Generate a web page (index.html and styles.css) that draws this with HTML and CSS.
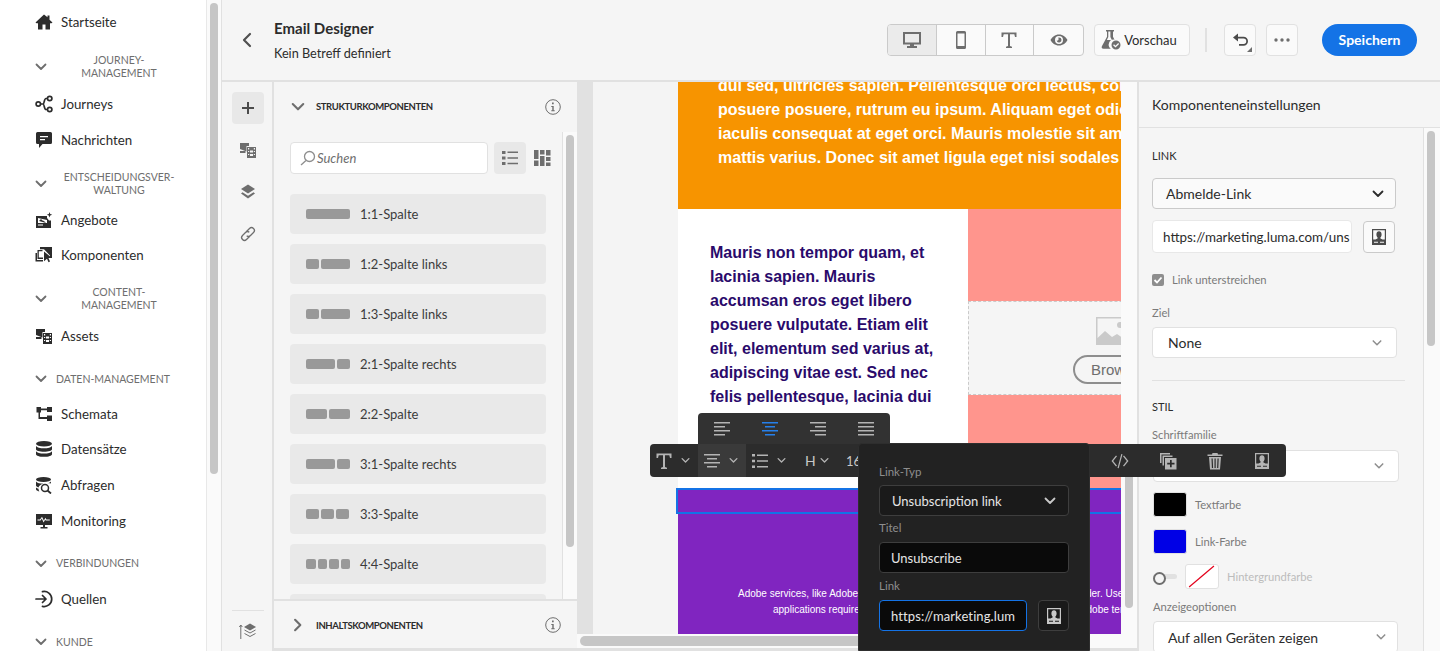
FILE: index.html
```html
<!DOCTYPE html>
<html lang="de">
<head>
  <meta charset="UTF-8">
  <title>Email Designer</title>
  <link rel="stylesheet" href="styles.css">
</head>
<body>

  <svg class="sprite" width="0" height="0">
    <symbol id="i-chev" viewBox="0 0 12 12"><path d="M1.5 3.5 6 8l4.5-4.5" fill="none" stroke="currentColor" stroke-width="1.8" stroke-linecap="round" stroke-linejoin="round"/></symbol>
    <symbol id="i-stamp" viewBox="0 0 18 18"><path fill-rule="evenodd" d="M2 1h14v16H2zM3.200 2.200v9.300h2.300c1.400-.5 2.200-1 2.300-1.700-.9-.8-1.400-2-1.400-3.300C6.400 4.500 7.500 3.300 9 3.300s2.600 1.200 2.600 3.200c0 1.300-.5 2.500-1.400 3.300.1.700.9 1.200 2.300 1.700h2.300V2.200zM4 13.800v1h4v-1zm6 0v1h4v-1z"/></symbol>
    <symbol id="i-assets" viewBox="0 0 18 18"><path d="M1 2h9v3H7.500v5.500L1 8z"/><path d="M1 10h5.500v2H1z"/><path fill-rule="evenodd" d="M8 6h9v11H8zm1 1v1.500h1.200V7zm5.800 0v1.500H16V7zM9 10v1h1.200v-1zm5.800 0v1H16v-1zM11 9.500v2h3v-2zm0 3.500v2h3v-2zM9 13v1h1.200v-1zm5.800 0v1H16v-1z"/></symbol>
    <symbol id="i-info" viewBox="0 0 16 16"><circle cx="8" cy="8" r="7.300" fill="none" stroke="currentColor"/><path d="M7 3.500h1.700v1.700H7zM6.300 7h2.400v4.300h1v1H6.300v-1h1V8h-1z"/></symbol>
  </svg>

  <div class="shell">
    <aside class="nav">
      <a class="nav-item">
        <svg class="nav-icon" viewBox="0 0 18 18"><path d="M9 1.500 .5 9.500l1 .8H3V16.500h4.500v-5h3v5H15v-6.200h1.500l1-.8-3-2.800V2.500H12.500v1.800z"/></svg>
        Startseite
      </a>
      <div class="nav-section multi">
        <svg class="nav-chev"><use href="#i-chev"/></svg>
        <span>Journey-<br>Management</span>
      </div>
      <a class="nav-item">
        <svg class="nav-icon" viewBox="0 0 18 18"><g fill="none" stroke="currentColor" stroke-width="1.700"><circle cx="3.300" cy="9" r="2.200"/><circle cx="14.700" cy="3.500" r="2.200"/><circle cx="14.700" cy="14.500" r="2.200"/><path d="M5.500 9h2.500c1.500 0 1-5.500 3-5.500h1.500M8 9c1.500 0 1 5.500 3 5.500h1.500"/></g></svg>
        Journeys
      </a>
      <a class="nav-item">
        <svg class="nav-icon" viewBox="0 0 18 18"><path fill-rule="evenodd" d="M2.500 1h13A1.500 1.500 0 0 1 17 2.500v9a1.500 1.500 0 0 1-1.500 1.500H7.500L4 17v-4H2.500A1.500 1.500 0 0 1 1 11.500v-9A1.500 1.500 0 0 1 2.500 1zM5 5v1.200h8V5zm0 3v1.200h5V8z"/></svg>
        Nachrichten
      </a>
      <div class="nav-section multi tight">
        <svg class="nav-chev"><use href="#i-chev"/></svg>
        <span>Entscheidungsver-<br>waltung</span>
      </div>
      <a class="nav-item">
        <svg class="nav-icon" viewBox="0 0 18 18"><path fill-rule="evenodd" d="M1 5h11v2l2 2.500h2V17H1zm2 2v5h9V9zm1 3 2-2 1.500 1.500L9 10l2 2zM3 13.500v1h5v-1z"/><path d="m14.500 1 .7 2 2 .7-2 .7-.7 2-.7-2-2-.7 2-.7z"/></svg>
        Angebote
      </a>
      <a class="nav-item">
        <svg class="nav-icon" viewBox="0 0 18 18"><path fill-rule="evenodd" d="M5 1h12v11h-2V9.500L9 3.200H5zM2.500 4h5v1.300H3.800v6.200H8V13H2.500zM.5 7H2v7h6v1.500H.5z"/><path d="m9 5.500 8 6.500h-3.500L15 15.500l-1.500.7-1.500-3.500-3 2.500z"/></svg>
        Komponenten
      </a>
      <div class="nav-section multi last">
        <svg class="nav-chev"><use href="#i-chev"/></svg>
        <span>Content-<br>Management</span>
      </div>
      <a class="nav-item">
        <svg class="nav-icon"><use href="#i-assets"/></svg>
        Assets
      </a>
      <div class="nav-section single">
        <svg class="nav-chev"><use href="#i-chev"/></svg>
        <span>Daten-Management</span>
      </div>
      <a class="nav-item">
        <svg class="nav-icon" viewBox="0 0 18 18"><path d="M1.500 2H6v1.500h6V2h5v5h-5V5.200H6V7.500H5V12h7v-1.500h5V16h-5v-2H3.500V7.500h-2z"/></svg>
        Schemata
      </a>
      <a class="nav-item">
        <svg class="nav-icon" viewBox="0 0 18 18"><ellipse cx="9" cy="3.800" rx="8" ry="2.800"/><path d="M1 6c1 1.500 4 2.300 8 2.300S16 7.500 17 6v3.200c0 1.400-3.500 2.500-8 2.500s-8-1.100-8-2.500z"/><path d="M1 11.300c1 1.500 4 2.300 8 2.300s7-.8 8-2.300v2.900c0 1.500-3.500 2.600-8 2.600s-8-1.100-8-2.600z"/></svg>
        Datensätze
      </a>
      <a class="nav-item">
        <svg class="nav-icon" viewBox="0 0 18 18"><ellipse cx="8.500" cy="3.500" rx="7.500" ry="2.500"/><path d="M1 5.500C2 7 5 7.700 8.500 7.700c-3 .5-4.500 2-5 3.800C2 11 1 10.300 1 9.500zM1 11.500c.6.500 1.500.9 2.500 1.200 0 1 .3 2 .9 2.700C2.400 15 1 14.200 1 13.200zM16 5.500v2c-1-.2-3-.2-4 0 1.500-.3 3-.9 4-2z"/><circle cx="10" cy="12" r="3.500" fill="none" stroke="currentColor" stroke-width="1.500"/><path d="m12.500 14.500 3.500 3" stroke="currentColor" stroke-width="1.800" fill="none"/></svg>
        Abfragen
      </a>
      <a class="nav-item">
        <svg class="nav-icon" viewBox="0 0 18 18"><path fill-rule="evenodd" d="M1 2h16v11h-7v2h2.500v1.500h-7V15H8v-2H1zm1.500 6.500h3l1.300-2 1.800 4 1.500-2.800.7.800h4V7.500h-3.500L10.500 5.700 8.800 8.500 7 4.700 5 7.500H2.500z"/></svg>
        Monitoring
      </a>
      <div class="nav-section single">
        <svg class="nav-chev"><use href="#i-chev"/></svg>
        <span>Verbindungen</span>
      </div>
      <a class="nav-item">
        <svg class="nav-icon" viewBox="0 0 18 18"><g fill="none" stroke="currentColor" stroke-width="1.700" stroke-linecap="round" stroke-linejoin="round"><path d="M1 9h10M7.500 5.500 11 9l-3.500 3.500"/><path d="M7.500 1.700a7.500 7.500 0 1 1 0 14.600"/></g></svg>
        Quellen
      </a>
      <div class="nav-section single">
        <svg class="nav-chev"><use href="#i-chev"/></svg>
        <span>Kunde</span>
      </div>
    </aside>
    <div class="nav-scroll"><div class="nav-thumb"></div></div>

    <main class="app">
      <header class="topbar">
        <svg class="back" viewBox="0 0 12 16"><path d="M9 2 3 8l6 6" fill="none" stroke="currentColor" stroke-width="2.200" stroke-linecap="round" stroke-linejoin="round"/></svg>
        <div class="title-block">
          <div class="title">Email Designer</div>
          <div class="subtitle">Kein Betreff definiert</div>
        </div>
        <div class="seg">
          <button class="seg-btn active">
            <svg viewBox="0 0 18 18" width="18" height="18"><path fill-rule="evenodd" d="M0 1h18v12.500h-7V15h3v2H4v-2h3v-1.500H0zm2 2v8.500h14V3z"/></svg>
          </button>
          <button class="seg-btn">
            <svg viewBox="0 0 18 18" width="18" height="18"><path fill-rule="evenodd" d="M5.500 0h7A1.500 1.500 0 0 1 14 1.500v15a1.500 1.500 0 0 1-1.500 1.500h-7A1.500 1.500 0 0 1 4 16.500v-15A1.500 1.500 0 0 1 5.500 0zM5.500 2.500v12.500h7V2.500z"/></svg>
          </button>
          <button class="seg-btn">
            <svg viewBox="0 0 18 18" width="18" height="18"><path d="M1.500 1.500h15V6H15L14.300 3.300H10V15l2 .8V17H6v-1.200l2-.8V3.300H3.700L3 6H1.500z"/></svg>
          </button>
          <button class="seg-btn">
            <svg viewBox="0 0 18 18" width="18" height="18"><path fill-rule="evenodd" d="M9 3.500c4 0 7 2.500 8.500 5.500C16 12 13 14.500 9 14.500S2 12 .5 9C2 6 5 3.500 9 3.500zM9 5a4 4 0 1 0 0 8 4 4 0 0 0 0-8zm0 1.500A2.500 2.500 0 1 1 6.600 9.600 1.500 1.500 0 0 0 8.500 7.700c0-.5-.1-.9-.3-1.100.3 0 .5-.1.800-.1z"/></svg>
          </button>
        </div>
        <button class="btn preview">
          <svg viewBox="0 0 20 20" width="20" height="20"><path fill-rule="evenodd" d="M5 0h8v1.500h-1v5.200l1.500 3a5 5 0 0 0-3.700 9H2.500C.8 18.700.2 17.500 1 16L6 6.700V1.500H5zm2.300 1.500v5.600l-1.500 3h5.100l-1.500-3V1.500z"/><path fill-rule="evenodd" d="M15 10.500a4.500 4.500 0 1 1 0 9 4.500 4.500 0 0 1 0-9zm2.200 2.500L14.500 15.800 13 14.300l-.9.900 2.400 2.400 3.600-3.700z"/></svg>
          Vorschau
        </button>
        <div class="bar-divider"></div>
        <button class="btn icon-btn undo">
          <svg viewBox="0 0 18 18" width="18" height="18"><path d="M7 2.500 2 6.500l5 4V7.500h5.500a2.700 2.700 0 0 1 0 5.500H8v1.800h4.500a4.500 4.500 0 0 0 0-9H7z"/></svg>
        </button>
        <button class="btn icon-btn more">
          <svg viewBox="0 0 18 6" width="18" height="6"><circle cx="3" cy="3" r="1.700"/><circle cx="9" cy="3" r="1.700"/><circle cx="15" cy="3" r="1.700"/></svg>
        </button>
        <button class="save">Speichern</button>
      </header>

      <div class="workspace">
        <div class="rail">
          <button class="rail-btn active">
            <svg viewBox="0 0 14 14" width="14" height="14"><path d="M6 1h2v5h5v2H8v5H6V8H1V6h5z"/></svg>
          </button>
          <button class="rail-btn"><svg width="18" height="18"><use href="#i-assets"/></svg></button>
          <button class="rail-btn">
            <svg viewBox="0 0 18 18" width="18" height="18"><path d="M9 1.500 16 6 9 10.500 2 6z"/><path d="m3.500 9.200 5.500 3.500 5.500-3.500L16 10.500l-7 5-7-5z"/></svg>
          </button>
          <button class="rail-btn">
            <svg viewBox="0 0 18 18" width="18" height="18"><g fill="none" stroke="currentColor" stroke-width="1.300"><path d="m7.500 6.500 3-3a2.800 2.800 0 0 1 4 4l-3 3a2.800 2.800 0 0 1-3.800.2"/><path d="m10.500 11.500-3 3a2.800 2.800 0 0 1-4-4l3-3a2.800 2.800 0 0 1 3.800-.2"/></g></svg>
          </button>
          <div class="rail-foot">
            <svg viewBox="0 0 18 18" width="18" height="18"><path d="M11 1.500 17 5l-6 3.500L5 5z"/><g fill="none" stroke="currentColor"><path d="M5.500 8 11 11l5.500-3"/><path d="M5.500 11.500 11 14.500l5.500-3"/><path d="M1.800 17V3M.3 5l1.500-2 1.500 2"/></g></svg>
          </div>
        </div>

        <section class="library">
          <div class="lib-head">
            <svg class="lib-chev"><use href="#i-chev"/></svg>
            <span class="lib-title">Strukturkomponenten</span>
            <svg class="info"><use href="#i-info"/></svg>
          </div>
          <div class="lib-body">
            <div class="lib-list">
              <div class="lib-tools">
                <div class="search">
                  <svg viewBox="0 0 16 16" width="16" height="16"><g fill="none" stroke="#8e8e8e" stroke-width="1.300"><circle cx="9.500" cy="6.500" r="5"/><path d="M6 10.500 1 15"/></g></svg>
                  Suchen
                </div>
                <button class="view-btn active">
                  <svg viewBox="0 0 18 18" width="18" height="18"><path d="M1 2h3.500v3H1zM6.500 2.500H17V4H6.500zM1 7.500h3.500v3H1zM6.500 8.200H17v1.500H6.500zM1 13h3.500v3H1zM6.500 13.700H17v1.500H6.500z"/></svg>
                </button>
                <button class="view-btn">
                  <svg viewBox="0 0 18 18" width="18" height="18"><path d="M1 1h4.500v9H1zM1 11.500h4.500V17H1zM7 1h4.500v4.500H7zM7 7h4.500v10H7zM13 1h4.500v5.500H13zM13 8h4.500v4H13zM13 13.500h4.500V17H13z"/></svg>
                </button>
              </div>
              <div class="card"><span class="bars"><i class="w44"></i></span>1:1-Spalte</div>
              <div class="card"><span class="bars"><i class="w13"></i><i class="w29"></i></span>1:2-Spalte links</div>
              <div class="card"><span class="bars"><i class="w13"></i><i class="w29"></i></span>1:3-Spalte links</div>
              <div class="card"><span class="bars"><i class="w29"></i><i class="w13"></i></span>2:1-Spalte rechts</div>
              <div class="card"><span class="bars"><i class="w21"></i><i class="w21"></i></span>2:2-Spalte</div>
              <div class="card"><span class="bars"><i class="w29"></i><i class="w13"></i></span>3:1-Spalte rechts</div>
              <div class="card"><span class="bars"><i class="w13"></i><i class="w13"></i><i class="w13"></i></span>3:3-Spalte</div>
              <div class="card"><span class="bars"><i class="w9"></i><i class="w9"></i><i class="w9"></i><i class="w9"></i></span>4:4-Spalte</div>
              <div class="card"></div>
            </div>
            <div class="lib-scroll"><div class="lib-thumb"></div></div>
          </div>
          <div class="lib-foot">
            <svg class="lib-chev closed"><use href="#i-chev"/></svg>
            <span class="lib-title">Inhaltskomponenten</span>
            <svg class="info"><use href="#i-info"/></svg>
          </div>
        </section>

        <section class="canvas">
          <div class="canvas-view">
            <div class="email">
              <div class="orange">
                dui sed, ultricies sapien. Pellentesque orci lectus, consectetur<br>
                posuere posuere, rutrum eu ipsum. Aliquam eget odio sed<br>
                iaculis consequat at eget orci. Mauris molestie sit amet metus<br>
                mattis varius. Donec sit amet ligula eget nisi sodales egestas
              </div>
              <div class="split">
                <div class="split-text">
                  Mauris non tempor quam, et<br>
                  lacinia sapien. Mauris<br>
                  accumsan eros eget libero<br>
                  posuere vulputate. Etiam elit<br>
                  elit, elementum sed varius at,<br>
                  adipiscing vitae est. Sed nec<br>
                  felis pellentesque, lacinia dui<br>
                  sed, ultricies sapien.
                </div>
                <div class="split-media">
                  <div class="dropzone">
                    <svg class="placeholder" viewBox="0 0 32 28" width="32" height="28"><path fill="#cacaca" fill-rule="evenodd" d="M0 0h32v28H0zM24 5a3 3 0 1 0 0 6 3 3 0 0 0 0-6zM1.500 21 9 14l7 6 5-3 9 6V1.500H1.500z"/></svg>
                    <span class="browse">Browse</span>
                  </div>
                </div>
              </div>
              <div class="purple">
                <div class="selected-row"></div>
                <div class="legal">
                  <div>Adobe services, like Adobe Creative Cloud applications, are licensed to the holder. Use of these</div>
                  <div class="legal-second">applications require a current membership and the acceptance of the Adobe terms of use.</div>
                </div>
              </div>
            </div>
            <div class="canvas-scroll"><div class="canvas-thumb"></div></div>
          </div>
          <div class="hscroll"><div class="hthumb"></div></div>
        </section>

        <section class="settings">
          <div class="settings-head">Komponenteneinstellungen</div>
          <div class="settings-body">
            <div class="settings-form">
              <h4 class="group">Link</h4>
              <div class="select link-type">Abmelde-Link<svg class="sel-chev dark"><use href="#i-chev"/></svg></div>
              <div class="url-row">
                <div class="field">https://marketing.luma.com/uns</div>
                <button class="stamp-btn"><svg width="18" height="18"><use href="#i-stamp"/></svg></button>
              </div>
              <label class="check">
                <span class="box"><svg viewBox="0 0 12 12" width="12" height="12"><path d="m2.500 6 2.500 2.500 4.500-5" fill="none" stroke="#fff" stroke-width="1.800"/></svg></span>
                Link unterstreichen
              </label>
              <div class="label ziel">Ziel</div>
              <div class="select plain none">None<svg class="sel-chev"><use href="#i-chev"/></svg></div>
              <hr class="rule">
              <h4 class="group stil">Stil</h4>
              <div class="label font-label">Schriftfamilie</div>
              <div class="select plain font-sel"><svg class="sel-chev"><use href="#i-chev"/></svg></div>
              <div class="color-row first"><span class="swatch black"></span>Textfarbe</div>
              <div class="color-row"><span class="swatch blue"></span>Link-Farbe</div>
              <div class="color-row off">
                <span class="toggle"></span>
                <span class="swatch none-swatch"><svg viewBox="0 0 34 25" width="32" height="23"><path d="M3 24 30 1" stroke="#e3001b" stroke-width="1.300"/></svg></span>
                Hintergrundfarbe
              </div>
              <div class="label display-label">Anzeigeoptionen</div>
              <div class="select plain display">Auf allen Geräten zeigen<svg class="sel-chev"><use href="#i-chev"/></svg></div>
            </div>
            <div class="settings-scroll"><div class="settings-thumb"></div></div>
          </div>
        </section>
      </div>
    </main>
  </div>

  <!-- floating editor toolbars -->
  <div class="align-pop">
    <svg viewBox="0 0 18 18" class="tb-icon"><path d="M1 2h16v1.500H1zM1 6h11v1.500H1zM1 10h16v1.500H1zM1 14h11v1.500H1z"/></svg>
    <svg viewBox="0 0 18 18" class="tb-icon on"><path d="M1 2h16v1.500H1zM4 6h10v1.500H4zM1 10h16v1.500H1zM4 14h10v1.500H4z"/></svg>
    <svg viewBox="0 0 18 18" class="tb-icon"><path d="M1 2h16v1.500H1zM6 6h11v1.500H6zM1 10h16v1.500H1zM6 14h11v1.500H6z"/></svg>
    <svg viewBox="0 0 18 18" class="tb-icon"><path d="M1 2h16v1.500H1zM1 6h16v1.500H1zM1 10h16v1.500H1zM1 14h16v1.500H1z"/></svg>
  </div>

  <div class="toolbar">
    <div class="tb-left">
      <span class="tb-group">
        <svg viewBox="0 0 18 18" class="tb-icon"><path d="M1.500 1.500h15V6H15l-.7-2.700H10V15l2 .8V17H6v-1.200l2-.8V3.300H3.700L3 6H1.500z"/></svg>
        <svg class="tb-chev"><use href="#i-chev"/></svg>
      </span>
      <span class="tb-group active">
        <svg viewBox="0 0 18 18" class="tb-icon"><path d="M1 2h16v1.500H1zM4 6h10v1.500H4zM1 10h16v1.500H1zM4 14h10v1.500H4z"/></svg>
        <svg class="tb-chev"><use href="#i-chev"/></svg>
      </span>
      <span class="tb-group">
        <svg viewBox="0 0 18 18" class="tb-icon"><path d="M1 2h3v2.500H1zM6 2.500h11V4H6zM1 7.700h3v2.500H1zM6 8.200h11v1.500H6zM1 13.500h3V16H1zM6 14h11v1.500H6z"/></svg>
        <svg class="tb-chev"><use href="#i-chev"/></svg>
      </span>
      <span class="tb-group h">H<svg class="tb-chev"><use href="#i-chev"/></svg></span>
      <span class="tb-size">16</span>
    </div>
    <div class="tb-right">
      <svg viewBox="0 0 20 18" class="tb-icon wide"><path d="M6 3.500 1.500 9 6 14.500l1-.8L3.200 9 7 4.300zM14 3.500 18.500 9 14 14.500l-1-.8L16.800 9 13 4.300zM11.300 2l1.200.2-3.800 14-1.200-.2z"/></svg>
      <svg viewBox="0 0 18 18" class="tb-icon"><path d="M1 1h10v1.500H2.500V11H1z"/><path d="M3.500 3.500h10V5H5v8.500H3.500z"/><path fill-rule="evenodd" d="M6 6h11.500v11.500H6zm5 2v2.800H8.200v1.700H11v2.800h1.700v-2.800h2.800v-1.700h-2.800V8z"/></svg>
      <svg viewBox="0 0 18 18" class="tb-icon"><path fill-rule="evenodd" d="M6.500 1h5l.5 1.500h4.500V4h-15V2.500H6zM3 5h12l-1 12.500H4zm2.500 1.500.4 9.500h1.200l-.4-9.500zm3 0V16h1.200V6.500zm3 0-.4 9.500h1.200l.4-9.500z"/></svg>
      <svg viewBox="0 0 18 18" class="tb-icon"><use href="#i-stamp"/></svg>
    </div>
  </div>

  <div class="link-pop">
    <div class="pop-label first">Link-Typ</div>
    <div class="pop-select">Unsubscription link<svg class="pop-chev"><use href="#i-chev"/></svg></div>
    <div class="pop-label titel">Titel</div>
    <div class="pop-input">Unsubscribe</div>
    <div class="pop-label link">Link</div>
    <div class="pop-row">
      <div class="pop-input focus">https://marketing.lum</div>
      <button class="pop-stamp"><svg width="18" height="18"><use href="#i-stamp"/></svg></button>
    </div>
  </div>

</body>
</html>
```

FILE: styles.css
```css
* {
  box-sizing: border-box;
}

html, body {
  height: 100%;
  margin: 0;
  overflow: hidden;
}

body {
  font-family: Lato, 'Noto Sans', sans-serif;
  font-size: 14px;
  color: #2c2c2c;
  background: #fff;
}

button {
  font-family: inherit;
  padding: 0;
  cursor: pointer;
}

.sprite {
  position: absolute;
}

.shell {
  display: flex;
  height: 651px;
}

/* left nav */
.nav {
  width: 207px;
  flex: none;
  padding: 4px 0 0 35px;
  background: #fff;
  border-right: 1px solid #e8e8e8;
  overflow: hidden;
}

.nav-item {
  display: flex;
  align-items: center;
  gap: 8px;
  height: 35.6px;
  font-size: 13.300px;
  color: #2c2c2c;
}

.nav-icon {
  width: 18px;
  height: 18px;
  flex: none;
  fill: #2c2c2c;
  color: #2c2c2c;
}

.nav-section {
  display: flex;
  align-items: center;
  font-size: 10.500px;
  line-height: 13px;
  text-transform: uppercase;
  color: #6e6e6e;
}

.nav-chev {
  width: 12px;
  height: 12px;
  flex: none;
  color: #6e6e6e;
  margin-right: 9px;
}

.nav-section.multi {
  padding: 14px 0 7px;
}

.nav-section.multi span {
  width: 114px;
  margin-left: 6px;
  text-align: center;
}

.nav-section.tight {
  padding: 13px 0 5px;
}

.nav-section.last {
  padding: 13px 0 6px;
}

.nav-section.single {
  padding: 19px 0 10.5px;
}

.nav-scroll {
  width: 14px;
  flex: none;
  background: #fafafa;
  padding: 3px 3px 0;
}

.nav-thumb {
  height: 471px;
  background: #c6c6c6;
  border-radius: 4px;
}

.app {
  flex: 1;
  min-width: 0;
  display: flex;
  flex-direction: column;
  border-left: 1px solid #e1e1e1;
  background: #f5f5f5;
}

/* header */
.topbar {
  height: 82px;
  flex: none;
  display: flex;
  align-items: center;
  padding: 0 23px 0 19px;
  border-bottom: 2px solid #e1e1e1;
}

.back {
  width: 12px;
  height: 16px;
  color: #505050;
}

.title-block {
  margin: -1px auto 0 21px;
}

.title {
  font-size: 15px;
  font-weight: 700;
  line-height: 20px;
  margin-bottom: 6px;
}

.subtitle {
  font-size: 12.700px;
  line-height: 18px;
}

.seg {
  display: flex;
  height: 32px;
  border: 1px solid #cacaca;
  border-radius: 4px;
  background: #fafafa;
  overflow: hidden;
}

.seg-btn {
  width: 48.750px;
  border: none;
  border-right: 1px solid #cacaca;
  background: none;
  display: flex;
  align-items: center;
  justify-content: center;
  fill: #6e6e6e;
}

.seg-btn:last-child {
  border-right: none;
}

.seg-btn.active {
  background: #ebebeb;
}

.btn {
  height: 32px;
  border: 1px solid #e1e1e1;
  border-radius: 4px;
  background: #fafafa;
  display: flex;
  align-items: center;
  justify-content: center;
  fill: #6e6e6e;
  color: #2c2c2c;
  font-size: 13px;
}

.preview {
  width: 96px;
  gap: 3px;
  margin-left: 10px;
  padding-right: 6px;
}

.bar-divider {
  width: 2px;
  height: 24px;
  background: #e1e1e1;
  margin: 0 17px 0 15px;
}

.icon-btn {
  width: 32px;
}

.undo {
  position: relative;
  fill: #4b4b4b;
}

/* small corner triangle on the undo button */
.undo::after {
  content: "";
  position: absolute;
  right: 3px;
  bottom: 3px;
  border-style: solid;
  border-width: 0 0 5px 5px;
  border-color: transparent transparent #6e6e6e transparent;
}

.more {
  margin-left: 10px;
}

.save {
  width: 95px;
  height: 32px;
  margin-left: 24px;
  padding-bottom: 2px;
  border: none;
  border-radius: 16px;
  background: #1473e6;
  color: #fff;
  font-size: 14px;
  font-weight: 700;
}

/* workspace */
.workspace {
  flex: 1;
  min-height: 0;
  display: flex;
}

.rail {
  width: 52px;
  flex: none;
  display: flex;
  flex-direction: column;
  align-items: center;
  padding: 10px 0 0 2px;
  gap: 10px;
  border-right: 2px solid #e1e1e1;
}

.rail-btn {
  width: 32px;
  height: 32px;
  border: none;
  border-radius: 4px;
  background: none;
  display: flex;
  align-items: center;
  justify-content: center;
  fill: #6e6e6e;
  color: #6e6e6e;
}

.rail-btn.active {
  background: #e8e8e8;
  fill: #4b4b4b;
}

.rail-foot {
  margin-top: auto;
  width: 32px;
  height: 41px;
  border-top: 1px solid #e1e1e1;
  display: flex;
  align-items: center;
  justify-content: center;
  fill: #6e6e6e;
  color: #6e6e6e;
}

/* component library */
.library {
  width: 303px;
  flex: none;
  display: flex;
  flex-direction: column;
  border-bottom: 3px solid #e1e1e1;
}

.lib-head {
  height: 50px;
  flex: none;
  display: flex;
  align-items: center;
  padding: 0 16px 1px 17px;
}

.lib-chev {
  width: 14px;
  height: 14px;
  flex: none;
  color: #6e6e6e;
}

.lib-chev.closed {
  transform: rotate(-90deg);
}

.lib-title {
  font-size: 9.500px;
  letter-spacing: -.4px;
  font-weight: 700;
  text-transform: uppercase;
  color: #2c2c2c;
  margin-left: 11px;
  margin-right: auto;
}

.info {
  width: 16px;
  height: 16px;
  fill: #6e6e6e;
  color: #6e6e6e;
}

.lib-body {
  flex: 1;
  min-height: 0;
  display: flex;
}

.lib-list {
  flex: 1;
  min-width: 0;
  overflow: hidden;
  padding: 10px 0 0 16px;
}

.lib-tools {
  display: flex;
  align-items: center;
  margin-bottom: 20px;
}

.search {
  width: 198px;
  height: 32px;
  flex: none;
  display: flex;
  align-items: center;
  gap: 1px;
  padding-left: 9px;
  background: #fff;
  border: 1px solid #e1e1e1;
  border-radius: 4px;
  font-size: 13px;
  font-style: italic;
  color: #6e6e6e;
}

.view-btn {
  width: 32px;
  height: 32px;
  flex: none;
  margin-left: 6px;
  border: none;
  border-radius: 4px;
  background: none;
  display: flex;
  align-items: center;
  justify-content: center;
  fill: #6e6e6e;
}

.view-btn:last-child {
  margin-left: 0;
}

.view-btn.active {
  background: #e8e8e8;
}

.card {
  display: flex;
  align-items: center;
  width: 256px;
  height: 40px;
  margin-bottom: 10px;
  padding-left: 16px;
  background: #e9e9e9;
  border-radius: 4px;
  font-size: 13px;
  color: #3c3c3c;
}

.bars {
  display: flex;
  gap: 2px;
  width: 54px;
}

.bars i {
  display: block;
  height: 10px;
  background: #999;
  border-radius: 2px;
}

.w44 { width: 44px; }
.w29 { width: 29px; }
.w21 { width: 21px; }
.w13 { width: 13px; }
.w9 { width: 9.500px; }

.lib-scroll {
  width: 15px;
  flex: none;
  border-left: 1px solid #e1e1e1;
  background: #fafafa;
  padding: 3px 3px 0;
}

.lib-thumb {
  width: 8px;
  height: 412px;
  background: #c6c6c6;
  border-radius: 4px;
}

.lib-foot {
  height: 49px;
  flex: none;
  display: flex;
  align-items: center;
  padding: 1px 16px 0 17px;
  border-top: 2px solid #e1e1e1;
}

/* email canvas */
.canvas {
  flex: 1;
  min-width: 0;
  display: flex;
  flex-direction: column;
  background: #f4f4f4;
  border-bottom: 3px solid #e1e1e1;
  overflow: hidden;
}

.canvas-view {
  flex: 1;
  min-height: 0;
  display: flex;
  padding-left: 85px;
  border-left: 16px solid #e1e1e1;
}

.email {
  width: 443px;
  flex: none;
  font-family: 'Liberation Sans', Arial, sans-serif;
  font-weight: 700;
  font-size: 16px;
  line-height: 24px;
}

.orange {
  height: 135px;
  margin-top: -8px;
  padding-left: 40px;
  background: #f79400;
  color: #fff;
  white-space: nowrap;
  overflow: hidden;
}

.split {
  display: flex;
  height: 279px;
}

.split-text {
  width: 290px;
  padding: 32px 0 0 32px;
  background: #fff;
  color: #2a0a6b;
  white-space: nowrap;
}

.split-media {
  flex: 1;
  min-width: 0;
  padding-top: 92px;
  background: #ff958d;
  overflow: hidden;
}

.dropzone {
  width: 200px;
  height: 94px;
  padding: 15px 0 0 105px;
  background: #f5f5f5;
  border: 1px dashed #cacaca;
}

.placeholder {
  display: block;
  margin: 0 0 10px 22px;
}

.browse {
  display: inline-block;
  height: 29px;
  margin-left: -1px;
  padding: 0 20px 0 16px;
  border: 2px solid #8e8e8e;
  border-radius: 15px;
  color: #6e6e6e;
  font-weight: 400;
  font-size: 15px;
  line-height: 25px;
}

.purple {
  height: 146px;
  background: #8025c0;
  color: #fff;
  font-weight: 400;
}

.selected-row {
  height: 26px;
  margin-left: -2px;
  border: 2px solid #1473e6;
  border-right: none;
}

.legal {
  padding: 72px 0 0 60px;
  font-size: 10px;
  line-height: 16px;
  white-space: nowrap;
  overflow: hidden;
}

.legal-second {
  padding-left: 35px;
}

.canvas-scroll {
  flex: 1;
  background: #fafafa;
  padding: 368px 4px 0 4px;
}

.canvas-thumb {
  height: 158px;
  background: #c6c6c6;
  border-radius: 4px;
}

.hscroll {
  height: 14px;
  flex: none;
  background: #fafafa;
  padding: 2px 0 0 3px;
}

.hthumb {
  width: 400px;
  height: 10px;
  background: #c6c6c6;
  border-radius: 5px;
}

/* right settings panel */
.settings {
  width: 303px;
  flex: none;
  display: flex;
  flex-direction: column;
  border-left: 2px solid #e1e1e1;
}

.settings-head {
  height: 46px;
  flex: none;
  display: flex;
  align-items: center;
  padding-left: 13px;
  border-bottom: 1px solid #e1e1e1;
}

.settings-body {
  flex: 1;
  min-height: 0;
  display: flex;
}

.settings-form {
  flex: 1;
  min-width: 0;
  overflow: hidden;
  padding: 21px 18px 0 13px;
  font-size: 11.200px;
}

.group {
  margin: 0;
  font-size: 11px;
  font-weight: 400;
  line-height: 14px;
  text-transform: uppercase;
  color: #2c2c2c;
}

.select {
  display: flex;
  align-items: center;
  justify-content: space-between;
  height: 31px;
  padding: 0 11px 0 13px;
  border: 1px solid #cacaca;
  border-radius: 4px;
  background: #fafafa;
  font-size: 14px;
  color: #2c2c2c;
}

.select.plain {
  background: #fff;
  border-color: #e1e1e1;
}

.sel-chev {
  width: 10px;
  height: 10px;
  color: #8e8e8e;
}

.sel-chev.dark {
  width: 12px;
  height: 12px;
  color: #2c2c2c;
}

.link-type {
  width: 244px;
  margin-top: 15px;
}

.url-row {
  display: flex;
  align-items: center;
  gap: 11px;
  margin-top: 11px;
}

.field {
  width: 200px;
  height: 33px;
  display: flex;
  align-items: center;
  padding-left: 10px;
  background: #fff;
  border: 1px solid #e8e8e8;
  border-radius: 4px;
  font-size: 13.400px;
  white-space: nowrap;
  overflow: hidden;
}

.stamp-btn {
  width: 32px;
  height: 32px;
  border: 1px solid #cacaca;
  border-radius: 4px;
  background: #fafafa;
  display: flex;
  align-items: center;
  justify-content: center;
  fill: #4b4b4b;
}

.check {
  display: flex;
  align-items: center;
  gap: 8px;
  margin-top: 20px;
  color: #7a7a7a;
}

.box {
  width: 12px;
  height: 12px;
  background: #8e8e8e;
  border-radius: 2px;
  display: flex;
}

.label {
  color: #7a7a7a;
  line-height: 16px;
}

.ziel {
  margin-top: 19px;
}

.none {
  width: 245px;
  margin-top: 6px;
  padding-left: 15px;
  padding-right: 14px;
}

.rule {
  width: 253px;
  height: 1px;
  margin: 22px 0 0;
  border: none;
  background: #e1e1e1;
}

.stil {
  margin-top: 19px;
}

.font-label {
  margin-top: 13px;
}

.font-sel {
  width: 246px;
  height: 32px;
  margin: 7px 0 0 1px;
  justify-content: flex-end;
  padding-right: 14px;
}

.color-row {
  display: flex;
  align-items: center;
  gap: 8px;
  height: 25px;
  margin: 12px 0 0 1px;
  color: #7a7a7a;
}

.color-row.first {
  margin-top: 10px;
}

.color-row.off {
  margin-top: 10px;
  color: #bcbcbc;
}

.swatch {
  width: 34px;
  height: 25px;
  border-radius: 3px;
  border: 1px solid #e1e1e1;
}

.black {
  background: #000;
}

.blue {
  background: #0000e6;
}

.none-swatch {
  background: #fff;
  display: flex;
  align-items: center;
  justify-content: center;
}

.toggle {
  position: relative;
  width: 24px;
  height: 5px;
  background: #e1e1e1;
  border-radius: 3px;
}

/* toggle knob */
.toggle::before {
  content: "";
  position: absolute;
  left: 0;
  top: -2px;
  width: 9px;
  height: 9px;
  background: #f5f5f5;
  border: 2px solid #6e6e6e;
  border-radius: 50%;
}

.display-label {
  margin: 10px 0 0 1px;
}

.display {
  width: 245px;
  height: 32px;
  margin: 6px 0 0 1px;
  padding-left: 14px;
}

.settings-scroll {
  width: 17px;
  flex: none;
  background: #fafafa;
  border-left: 1px solid #e1e1e1;
  padding: 3px 5px 0 3px;
}

.settings-thumb {
  height: 215px;
  background: #c6c6c6;
  border-radius: 4px;
}

/* floating toolbars, they sit over the canvas and the panel */
.align-pop {
  position: absolute;
  left: 698px;
  top: 413px;
  width: 192px;
  height: 31px;
  display: flex;
  align-items: center;
  padding: 0 0 0 15px;
  gap: 30px;
  background: #323232;
  border-radius: 4px 4px 0 0;
}

.tb-icon {
  width: 18px;
  height: 18px;
  fill: #b4b4b4;
  color: #b4b4b4;
  flex: none;
}

.tb-icon.on {
  fill: #2680eb;
}

.tb-icon.wide {
  width: 20px;
}

.toolbar {
  position: absolute;
  left: 650px;
  top: 444px;
  width: 636px;
  height: 33px;
  display: flex;
  justify-content: space-between;
  align-items: center;
  background: #2c2c2c;
  border-radius: 4px;
}

.tb-left {
  display: flex;
  align-items: center;
  height: 100%;
  color: #c8c8c8;
}

.tb-group {
  display: flex;
  align-items: center;
  height: 100%;
  width: 48px;
  padding-left: 5px;
  gap: 8px;
}

.tb-group.active {
  background: #3a3a3a;
}

.tb-group.h {
  width: 36px;
  gap: 4px;
  margin-left: 11px;
  padding-left: 0;
  font-size: 14px;
}

.tb-chev {
  width: 9px;
  height: 9px;
  color: #b4b4b4;
}

.tb-size {
  margin-left: 5px;
  font-size: 13px;
}

.tb-right {
  display: flex;
  align-items: center;
  gap: 29px;
  padding-right: 15px;
}

.link-pop {
  position: absolute;
  left: 858px;
  top: 443px;
  width: 232px;
  height: 208px;
  padding: 0 20px;
  background: #222;
  border: 1px solid #2e2e2e;
  border-radius: 4px 4px 0 0;
  color: #e6e6e6;
}

.pop-label {
  font-size: 11.500px;
  line-height: 16px;
  color: #8e8e8e;
}

.pop-label.first {
  margin-top: 20px;
}

.pop-label.titel {
  margin-top: 4px;
}

.pop-label.link {
  margin-top: 5px;
}

.pop-select {
  display: flex;
  align-items: center;
  justify-content: space-between;
  height: 31px;
  margin-top: 5px;
  padding: 0 12px;
  background: #1a1a1a;
  border: 1px solid #3e3e3e;
  border-radius: 4px;
  font-size: 13px;
}

.pop-chev {
  width: 12px;
  height: 12px;
  color: #c8c8c8;
}

.pop-input {
  height: 31px;
  display: flex;
  align-items: center;
  margin-top: 6px;
  padding: 0 11px;
  background: #0a0a0a;
  border: 1px solid #3e3e3e;
  border-radius: 4px;
  font-size: 13px;
  white-space: nowrap;
  overflow: hidden;
}

.pop-row {
  display: flex;
  gap: 11px;
}

.pop-input.focus {
  width: 150px;
  border-color: #1473e6;
  letter-spacing: .1px;
}

.pop-stamp {
  width: 31px;
  height: 31px;
  margin-top: 6px;
  background: #1a1a1a;
  border: 1px solid #3e3e3e;
  border-radius: 4px;
  display: flex;
  align-items: center;
  justify-content: center;
  fill: #c8c8c8;
}
```
